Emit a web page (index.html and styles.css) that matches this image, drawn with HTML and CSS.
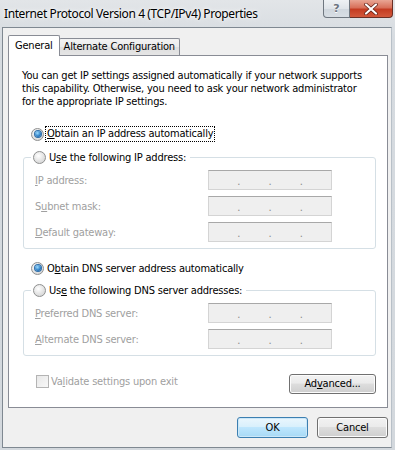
FILE: index.html
```html
<!DOCTYPE html>
<html>
<head>
<meta charset="utf-8">
<link rel="stylesheet" href="styles.css">
</head>
<body>
<div class="window">
  <div class="titlebar">
    <span class="title">Internet Protocol Version 4 (TCP/IPv4) Properties</span>
    <div class="caption-buttons">
      <div class="cap-help">?</div>
      <div class="cap-close">
        <svg width="14" height="12" viewBox="0 0 14 12"><path d="M2 1.5 L12 10.5 M12 1.5 L2 10.5" stroke="#5a1a10" stroke-width="3.6" stroke-linecap="round"/><path d="M2 1.5 L12 10.5 M12 1.5 L2 10.5" stroke="#ffffff" stroke-width="2.2" stroke-linecap="round"/></svg>
      </div>
    </div>
  </div>
  <div class="client">
    <div class="tabs">
      <div class="tab active">General</div>
      <div class="tab">Alternate Configuration</div>
    </div>
    <div class="panel">
      <p class="intro">You can get IP settings assigned automatically if your network supports this capability. Otherwise, you need to ask your network administrator for the appropriate IP settings.</p>
      <div class="radio-row first">
        <span class="radio checked"></span><span class="focus"><u>O</u>btain an IP address automatically</span>
      </div>
      <fieldset class="group">
        <legend><span class="radio"></span><span class="legend-text">U<u>s</u>e the following IP address:</span></legend>
        <div class="field"><span class="lbl"><u>I</u>P address:</span><span class="ipbox"><i>.</i><i>.</i><i>.</i></span></div>
        <div class="field"><span class="lbl">S<u>u</u>bnet mask:</span><span class="ipbox"><i>.</i><i>.</i><i>.</i></span></div>
        <div class="field"><span class="lbl"><u>D</u>efault gateway:</span><span class="ipbox"><i>.</i><i>.</i><i>.</i></span></div>
      </fieldset>
      <div class="radio-row dns">
        <span class="radio checked"></span><span class="text">O<u>b</u>tain DNS server address automatically</span>
      </div>
      <fieldset class="group group-dns">
        <legend><span class="radio"></span><span class="legend-text">Us<u>e</u> the following DNS server addresses:</span></legend>
        <div class="field"><span class="lbl"><u>P</u>referred DNS server:</span><span class="ipbox"><i>.</i><i>.</i><i>.</i></span></div>
        <div class="field"><span class="lbl"><u>A</u>lternate DNS server:</span><span class="ipbox"><i>.</i><i>.</i><i>.</i></span></div>
      </fieldset>
      <div class="bottom-row">
        <div class="check-row"><span class="checkbox"></span><span class="disabled">Va<u>l</u>idate settings upon exit</span></div>
        <div class="btn advanced">Ad<u>v</u>anced...</div>
      </div>
    </div>
    <div class="dialog-buttons">
      <div class="btn default">OK</div>
      <div class="btn">Cancel</div>
    </div>
  </div>
</div>
</body>
</html>
```

FILE: styles.css
```css
html, body {
  margin: 0;
  padding: 0;
}
body {
  width: 395px;
  height: 450px;
  overflow: hidden;
  font-family: "DejaVu Sans Condensed", "DejaVu Sans", sans-serif;
  font-size: 11px;
  letter-spacing: -0.2px;
  color: #000;
}
u {
  text-decoration: underline;
  text-underline-offset: 1px;
}
.window {
  width: 395px;
  height: 450px;
  box-sizing: border-box;
  background: linear-gradient(#e2e5e8, #d6dbe0 40px, #d3d8dd);
  display: flex;
  flex-direction: column;
  padding: 0 3px 2px 2px;
}
.titlebar {
  height: 27px;
  display: flex;
  justify-content: space-between;
  align-items: flex-start;
  flex: none;
}
.title {
  font-family: "Noto Sans", "Open Sans", sans-serif;
  font-size: 12px;
  letter-spacing: -0.4px;
  line-height: 14px;
  padding: 7px 0 0 2px;
  color: #000;
  text-shadow: 0 0 6px #ffffff, 0 0 3px #ffffff;
}
.caption-buttons {
  display: flex;
  margin-right: -1px;
}
.cap-help {
  width: 27px;
  height: 18px;
  box-sizing: border-box;
  border: 1px solid #6f7780;
  border-top: none;
  border-radius: 0 0 0 4px;
  background: linear-gradient(#eef1f4, #dfe4e9 50%, #cfd6dd 51%, #d8dee4);
  color: #6a7380;
  font-family: "DejaVu Sans", sans-serif;
  font-weight: bold;
  font-size: 11px;
  letter-spacing: 0;
  text-align: center;
  line-height: 17px;
  text-shadow: 0 1px 0 #fff;
}
.cap-close {
  width: 43px;
  height: 18px;
  box-sizing: border-box;
  border: 1px solid #6b2f25;
  border-top: none;
  border-left: none;
  border-radius: 0 0 4px 0;
  background: linear-gradient(#e9a694, #d8705a 45%, #c43c22 55%, #d3593c);
  display: flex;
  align-items: center;
  justify-content: center;
}
.client {
  flex: 1;
  background: #f0f0f0;
  border: 1px solid #7f8891;
  border-right-color: #b8c0c8;
  display: flex;
  flex-direction: column;
}
.tabs {
  display: flex;
  align-items: flex-end;
  padding: 7px 0 0 5px;
  margin-bottom: -1px;
  position: relative;
  z-index: 1;
}
.tab {
  height: 17px;
  line-height: 16px;
  box-sizing: border-box;
  border: 1px solid #898c95;
  border-bottom: none;
  border-radius: 2px 2px 0 0;
  background: linear-gradient(#f3f3f3, #ebebeb 50%, #dedede 51%, #e5e5e5);
  padding: 0 4px 0 4px;
  margin-bottom: 1px;
}
.tab.active {
  height: 21px;
  line-height: 19px;
  background: #fff;
  padding: 0 6px;
  margin-right: -1px;
  margin-bottom: 0;
  position: relative;
  z-index: 2;
}
.panel {
  background: #fff;
  border: 1px solid #898c95;
  margin: 0 3px 0 5px;
  padding: 13px 12px 13px 13px;
}
.intro {
  margin: 0;
  line-height: 13px;
  max-width: 348px;
}
.radio-row {
  display: flex;
  align-items: center;
  height: 16px;
  padding-left: 9px;
}
.radio-row.first {
  margin-top: 18px;
}
.radio-row.dns {
  margin-top: 11px;
}
.radio {
  width: 13px;
  height: 13px;
  box-sizing: border-box;
  border-radius: 50%;
  border: 1px solid #8e8f8f;
  background: radial-gradient(circle at 40% 35%, #ffffff, #e2e2e2 55%, #cfcfcf);
  flex: none;
  margin-right: 2px;
  display: inline-flex;
  align-items: center;
  justify-content: center;
  vertical-align: middle;
}
.radio.checked::after {
  content: "";
  width: 6px;
  height: 6px;
  border-radius: 50%;
  background: radial-gradient(circle at 40% 35%, #9cdcff, #2a7cc4 60%, #0d4d8a);
  box-shadow: 0 0 0 1px #2f6ea8;
}
.focus {
  outline: 1px dotted #000;
  outline-offset: 0;
  padding: 0 1px;
  line-height: 14px;
}
.text {
  padding-left: 1px;
}
.group {
  margin: 7px 0 0 1px;
  width: 353px;
  box-sizing: border-box;
  border: 1px solid #d5dfe5;
  border-radius: 3px;
  padding: 0 0 6px 11px;
  min-width: 0;
}
.group legend {
  display: flex;
  align-items: center;
  height: 16px;
  padding: 0 4px 0 2px;
  margin-left: -4px;
}
.legend-text {
  padding-left: 1px;
}
.group-dns {
  margin-top: 6px;
}
.field {
  display: flex;
  align-items: center;
  height: 20px;
  margin-top: 6px;
}
.field:first-of-type {
  margin-top: 5px;
}
.lbl {
  width: 173px;
  color: #a0a0a0;
}
.ipbox {
  width: 124px;
  height: 20px;
  box-sizing: border-box;
  border: 1px solid #d4d4d4;
  border-top-color: #a8a8a8;
  background: #efefef;
  display: flex;
  justify-content: space-evenly;
  align-items: center;
}
.ipbox i {
  font-style: normal;
  color: #8a8a8a;
  font-size: 11px;
  line-height: 11px;
  padding-top: 2px;
}
.bottom-row {
  display: flex;
  justify-content: space-between;
  align-items: flex-start;
  width: 353px;
  margin: 18px 0 0 1px;
}
.check-row {
  display: flex;
  align-items: center;
  padding-left: 13px;
  height: 14px;
}
.checkbox {
  width: 13px;
  height: 13px;
  box-sizing: border-box;
  border: 1px solid #b4b4b4;
  background: linear-gradient(135deg, #e8e8e8, #f8f8f8);
  margin-right: 2px;
}
.disabled {
  color: #a0a0a0;
}
.btn {
  width: 71px;
  height: 21px;
  box-sizing: border-box;
  border: 1px solid #707070;
  border-radius: 3px;
  background: linear-gradient(#f2f2f2, #ebebeb 45%, #dddddd 50%, #cfcfcf);
  box-shadow: inset 0 0 0 1px #fcfcfc;
  text-align: center;
  line-height: 19px;
}
.btn.advanced {
  width: 87px;
  height: 20px;
  line-height: 18px;
}
.dialog-buttons {
  display: flex;
  justify-content: flex-end;
  gap: 9px;
  margin: 9px 3px 0 0;
}
.btn.default {
  border-color: #3c7fb1;
  background: linear-gradient(#eaf6fd, #d9f0fc 45%, #bee6fd 50%, #a7d9f5);
  box-shadow: inset 0 0 0 1px #cbe7f8;
}
```
